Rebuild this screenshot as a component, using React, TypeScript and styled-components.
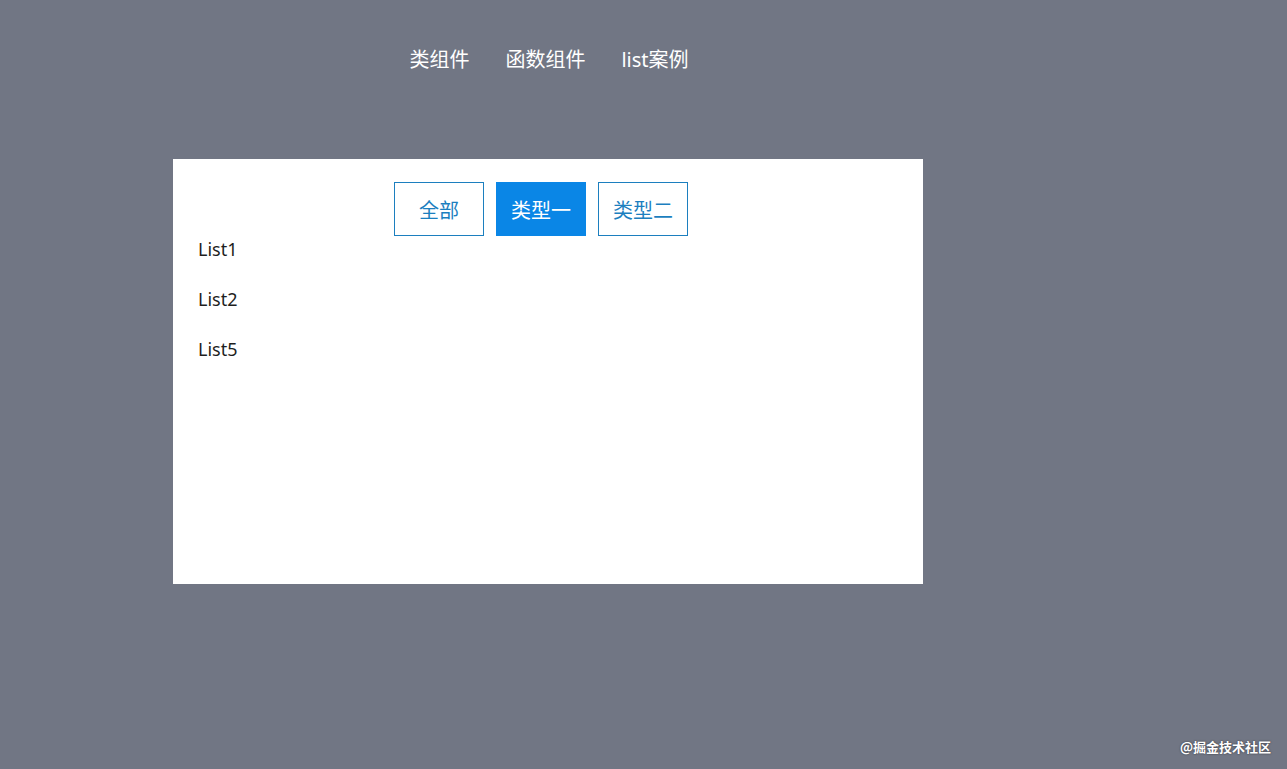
import React, { useState } from "react";
import styled, { createGlobalStyle } from "styled-components";

const GlobalStyle = createGlobalStyle`
  html, body {
    margin: 0;
    padding: 0;
    background: #717684;
    font-family: "Noto Sans", "Noto Sans CJK SC", sans-serif;
  }
`;

const Page = styled.div`
  position: relative;
  width: 1287px;
  height: 769px;
  overflow: hidden;
`;

const Container = styled.div`
  width: 750px;
  margin-left: 173px;
`;

const Nav = styled.nav`
  display: flex;
  justify-content: center;
  gap: 36px;
  height: 159px;
  padding-top: 45px;
  padding-left: 2px;
  box-sizing: border-box;
`;

const NavLink = styled.a`
  color: #ffffff;
  font-size: 20px;
  line-height: 30px;
  text-decoration: none;
  cursor: pointer;
`;

const Card = styled.div`
  background: #ffffff;
  height: 425px;
  padding: 23px 25px 0;
  box-sizing: border-box;
`;

const Tabs = styled.div`
  display: flex;
  justify-content: center;
  gap: 12px;
  padding-right: 14px;
`;

const TabButton = styled.button<{ $active: boolean }>`
  width: 90px;
  height: 54px;
  box-sizing: border-box;
  border: 1px solid ${(p) => (p.$active ? "#0a86e6" : "#1c7fbf")};
  background: ${(p) => (p.$active ? "#0a86e6" : "#ffffff")};
  color: ${(p) => (p.$active ? "#ffffff" : "#1c7fbf")};
  font-family: "Noto Sans CJK SC", sans-serif;
  font-size: 20px;
  padding: 0;
  cursor: pointer;
`;

const List = styled.ul`
  list-style: none;
  margin: 0;
  padding: 0;
`;

const Item = styled.li`
  font-size: 18px;
  line-height: 26px;
  height: 50px;
  color: #1e1e1e;
`;

const Watermark = styled.div`
  position: absolute;
  right: 16px;
  bottom: 13px;
  color: #ffffff;
  font-family: "Noto Sans CJK SC", sans-serif;
  font-size: 13px;
  font-weight: 700;
  text-shadow: 0 0 2px rgba(0, 0, 0, 0.6);
`;

const data = [
  { name: "List1", type: 1 },
  { name: "List2", type: 1 },
  { name: "List3", type: 2 },
  { name: "List4", type: 2 },
  { name: "List5", type: 1 },
];

const tabs = ["全部", "类型一", "类型二"];

const App: React.FC = () => {
  const [current, setCurrent] = useState(1);
  const shown = data.filter((d) => current === 0 || d.type === current);

  return (
    <Page>
      <GlobalStyle />
      <Container>
        <Nav>
          <NavLink>类组件</NavLink>
          <NavLink>函数组件</NavLink>
          <NavLink>list案例</NavLink>
        </Nav>
        <Card>
          <Tabs>
            {tabs.map((t, i) => (
              <TabButton key={t} $active={i === current} onClick={() => setCurrent(i)}>
                {t}
              </TabButton>
            ))}
          </Tabs>
          <List>
            {shown.map((d) => (
              <Item key={d.name}>{d.name}</Item>
            ))}
          </List>
        </Card>
      </Container>
      <Watermark>@掘金技术社区</Watermark>
    </Page>
  );
};

export default App;
